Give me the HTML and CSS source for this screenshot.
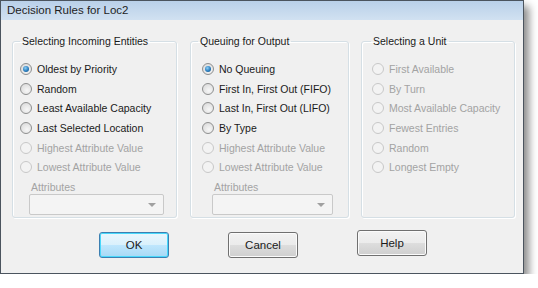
FILE: index.html
```html
<!DOCTYPE html>
<html lang="en">
<head>
    <meta charset="UTF-8">
    <title>Decision Rules for Loc2</title>
    <link rel="stylesheet" href="styles.css">
</head>
<body>
    <div class="window">
        <div class="titlebar">Decision Rules for Loc2</div>
        <div class="content">
            <div class="groups">
                <fieldset class="group group-in">
                    <legend>Selecting Incoming Entities</legend>
                    <div class="option"><span class="radio checked"></span>Oldest by Priority</div>
                    <div class="option"><span class="radio"></span>Random</div>
                    <div class="option"><span class="radio"></span>Least Available Capacity</div>
                    <div class="option"><span class="radio"></span>Last Selected Location</div>
                    <div class="option disabled"><span class="radio"></span>Highest Attribute Value</div>
                    <div class="option disabled"><span class="radio"></span>Lowest Attribute Value</div>
                    <div class="attr-label">Attributes</div>
                    <div class="combo"><span class="arrow"></span></div>
                </fieldset>
                <fieldset class="group group-out">
                    <legend>Queuing for Output</legend>
                    <div class="option"><span class="radio checked"></span>No Queuing</div>
                    <div class="option"><span class="radio"></span>First In, First Out (FIFO)</div>
                    <div class="option"><span class="radio"></span>Last In, First Out (LIFO)</div>
                    <div class="option"><span class="radio"></span>By Type</div>
                    <div class="option disabled"><span class="radio"></span>Highest Attribute Value</div>
                    <div class="option disabled"><span class="radio"></span>Lowest Attribute Value</div>
                    <div class="attr-label">Attributes</div>
                    <div class="combo"><span class="arrow"></span></div>
                </fieldset>
                <fieldset class="group group-unit">
                    <legend>Selecting a Unit</legend>
                    <div class="option disabled"><span class="radio"></span>First Available</div>
                    <div class="option disabled"><span class="radio"></span>By Turn</div>
                    <div class="option disabled"><span class="radio"></span>Most Available Capacity</div>
                    <div class="option disabled"><span class="radio"></span>Fewest Entries</div>
                    <div class="option disabled"><span class="radio"></span>Random</div>
                    <div class="option disabled"><span class="radio"></span>Longest Empty</div>
                </fieldset>
            </div>
            <div class="buttons">
                <button class="btn btn-ok">OK</button>
                <button class="btn btn-cancel">Cancel</button>
                <button class="btn btn-help">Help</button>
            </div>
        </div>
    </div>
</body>
</html>
```

FILE: styles.css
```css
body {
    margin: 0;
    background: #ffffff;
    font-family: 'Liberation Sans', Arial, sans-serif;
    font-size: 10.5px;
    color: #1a1a1a;
}

.window {
    box-sizing: border-box;
    width: 524px;
    height: 274px;
    background: #f0f0f0;
    border: 1px solid #4b545e;
    box-shadow: 5px 6px 8px rgba(0, 0, 0, 0.45);
}

.titlebar {
    height: 19px;
    line-height: 19px;
    padding-left: 6px;
    font-size: 11.5px;
    color: #1e1e1e;
    background: linear-gradient(#b9d0e9, #d1e1f1);
}

.groups {
    display: flex;
    padding-left: 11px;
    padding-top: 14px;
}

.group {
    box-sizing: border-box;
    height: 184px;
    margin: 0;
    padding: 11px 0 0 7px;
    border: 1px solid #d5dfe5;
    border-radius: 3px;
    box-shadow: inset 1px 1px 0 #ffffff, 1px 1px 0 #ffffff;
}

.group legend {
    padding: 0 2px;
    line-height: 14px;
    font-size: 10.5px;
    color: #1a1a1a;
}

.group-in {
    width: 165px;
}

.group-out {
    width: 159px;
    margin-left: 13px;
    padding-left: 11px;
}

.group-unit {
    width: 154px;
    margin-left: 12px;
    padding-left: 10px;
}

.group-out legend {
    margin-left: -4px;
}

.group-unit legend {
    margin-left: -1px;
}

.option {
    display: flex;
    align-items: center;
    height: 19.7px;
    white-space: nowrap;
}

.option.disabled {
    color: #a3a3a3;
}

.radio {
    box-sizing: border-box;
    width: 12px;
    height: 12px;
    margin-right: 5px;
    border-radius: 50%;
    border: 1px solid #8e8f8f;
    background: radial-gradient(circle at 60% 65%, #f7f7f7 0%, #dcdcdc 80%);
    flex-shrink: 0;
    position: relative;
}

.disabled .radio {
    border-color: #c8c8c8;
    background: #f3f3f3;
}

.radio.checked::after {
    content: '';
    position: absolute;
    left: 2px;
    top: 2px;
    width: 6px;
    height: 6px;
    border-radius: 50%;
    background: radial-gradient(circle at 40% 35%, #8fd0f5 0%, #2a7dbf 55%, #124a78 100%);
}

.attr-label {
    color: #a3a3a3;
    margin: 4px 0 0 11px;
    height: 13px;
    line-height: 13px;
}

.combo {
    box-sizing: border-box;
    position: relative;
    width: 135px;
    height: 21px;
    margin: 0 0 0 9px;
    border: 1px solid #c9c9c9;
    border-radius: 2px;
    background: #f4f4f4;
}

.group-out .attr-label {
    margin-left: 12px;
}

.group-out .combo {
    width: 121px;
    margin-left: 10px;
}

.arrow {
    position: absolute;
    right: 7px;
    top: 8px;
    border-left: 4px solid transparent;
    border-right: 4px solid transparent;
    border-top: 4px solid #a0a0a0;
}

.buttons {
    display: flex;
    align-items: flex-start;
    padding: 14px 0 0 98px;
}

.btn {
    box-sizing: border-box;
    width: 70px;
    height: 26px;
    font-family: 'Liberation Sans', Arial, sans-serif;
    font-size: 11.5px;
    color: #1a1a1a;
    border: 1px solid #707070;
    border-radius: 3px;
    background: linear-gradient(#f2f2f2 0%, #ebebeb 50%, #dddddd 51%, #cfcfcf 100%);
    box-shadow: inset 0 0 0 1px #fbfbfb;
    padding: 0;
}

.btn-ok {
    border-color: #3c7fb1;
    background: linear-gradient(#eaf6fd 0%, #d9f0fc 50%, #bee6fd 51%, #a7d9f5 100%);
    box-shadow: inset 0 0 0 1px #48d8fb;
}

.btn-cancel {
    margin-left: 59px;
}

.btn-help {
    margin-left: 59px;
    margin-top: -2px;
}
```
